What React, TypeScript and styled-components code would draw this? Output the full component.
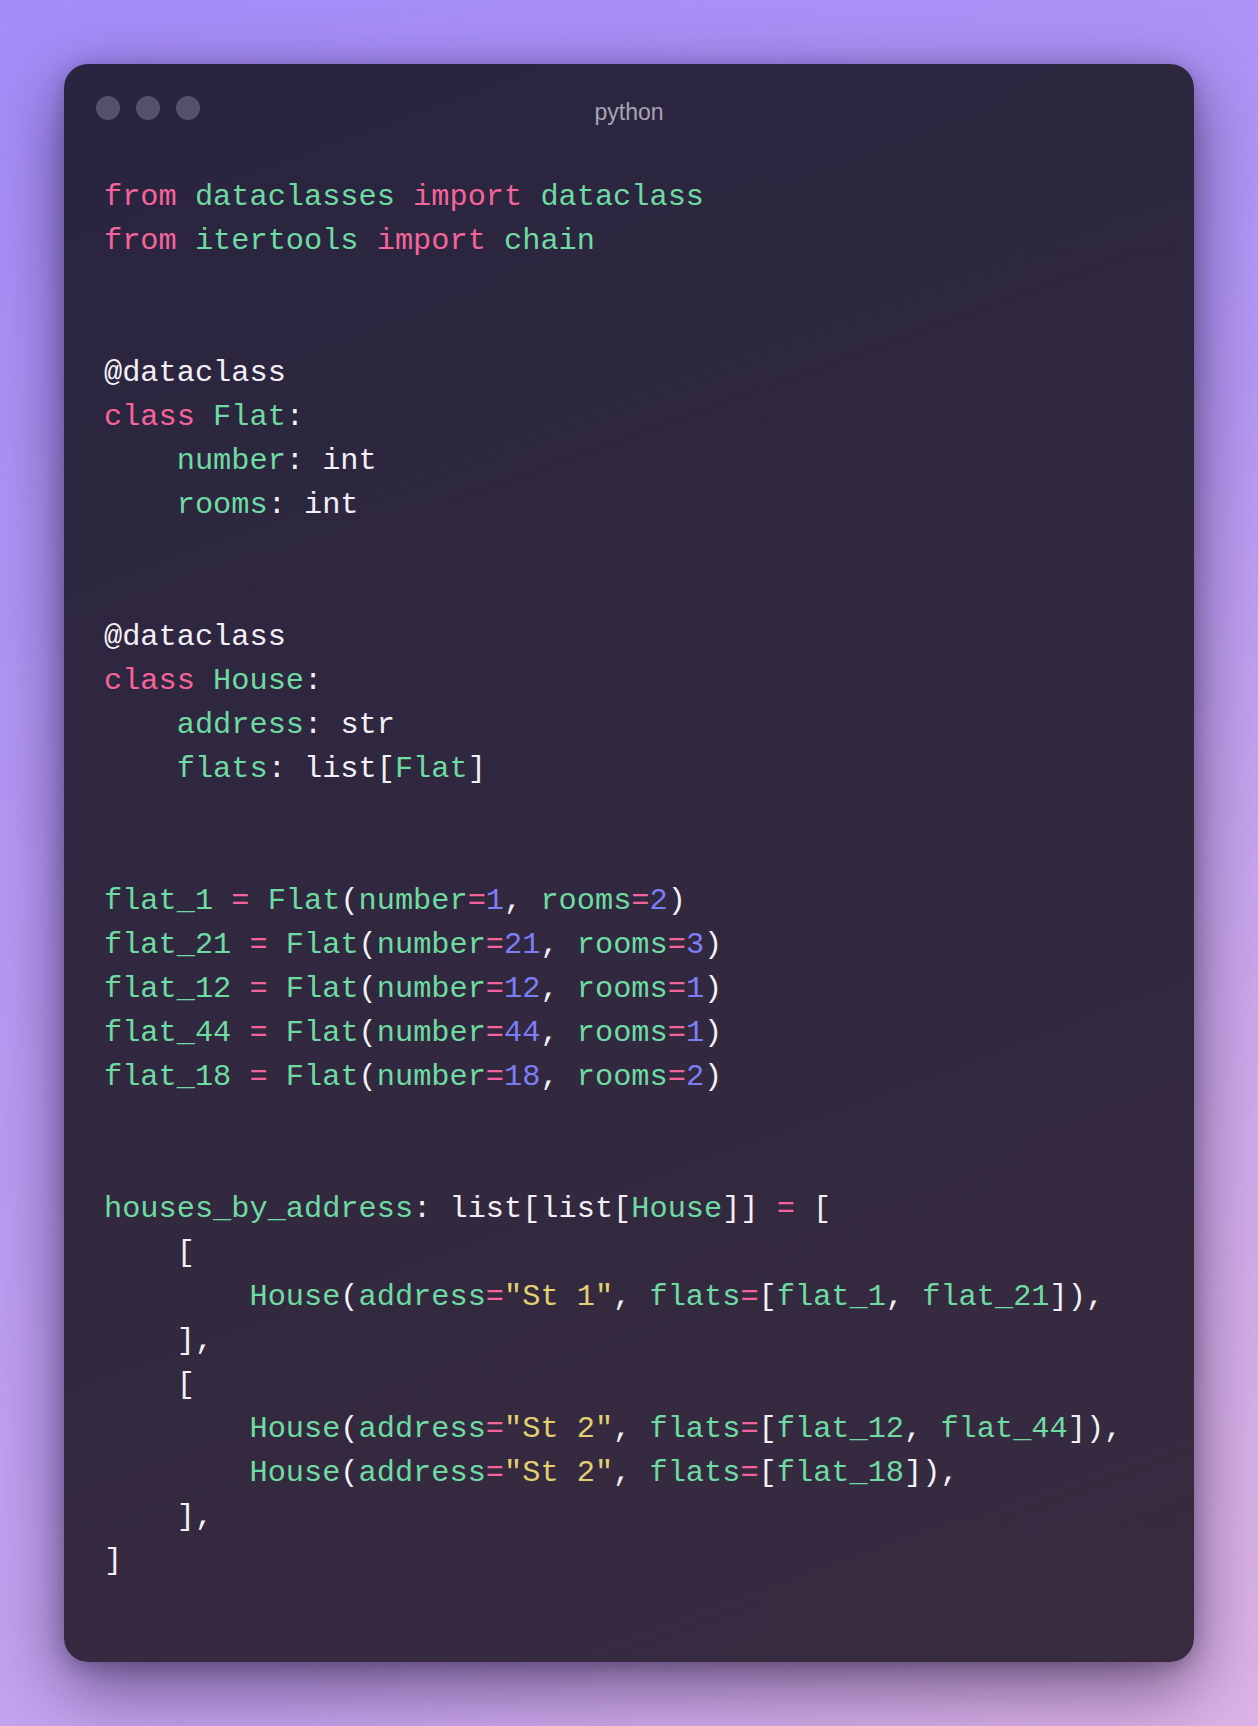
import React from "react";
import styled, { createGlobalStyle } from "styled-components";

const GlobalStyle = createGlobalStyle`
  html, body { margin: 0; padding: 0; }
  body { background: #b49cf3; }
`;

type Tone = "kw" | "name" | "plain" | "num" | "str" | "op";

const toneColor: Record<Tone, string> = {
  kw: "#f4649a",
  op: "#f4649a",
  name: "#6edba2",
  plain: "#f4f0f7",
  num: "#7d7ef6",
  str: "#e2d072",
};

const Page = styled.div`
  min-height: 1726px;
  box-sizing: border-box;
  padding: 64px 64px 64px;
  background:
    radial-gradient(ellipse at 100% 100%, rgba(222, 180, 230, 0.9) 0%, rgba(222, 180, 230, 0) 55%),
    linear-gradient(160deg, #a38cf8 0%, #b89af4 45%, #cba8ec 100%);
`;

const Window = styled.div`
  width: 1130px;
  box-sizing: border-box;
  border-radius: 24px;
  padding: 32px 32px 79px;
  background: linear-gradient(160deg, #29243f 0%, #30283f 45%, #382b40 100%);
  box-shadow: 0 24px 70px rgba(20, 10, 40, 0.55), 0 4px 20px rgba(20, 10, 40, 0.25);
`;

const TitleBar = styled.div`
  display: grid;
  grid-template-columns: 1fr auto 1fr;
  align-items: start;
  height: 24px;
`;

const Dots = styled.div`
  display: flex;
  gap: 16px;
`;

const Dot = styled.span`
  width: 24px;
  height: 24px;
  border-radius: 50%;
  background: #56516a;
`;

const Title = styled.div`
  font-family: "Liberation Sans", Arial, sans-serif;
  font-size: 23px;
  line-height: 24px;
  padding-top: 4px;
  color: #a7a3b5;
`;

const Code = styled.pre`
  margin: 55px 0 0;
  padding: 0 0 0 8px;
  font-family: "Liberation Mono", "Courier New", monospace;
  font-size: 30.3px;
  line-height: 44px;
  color: #f4f0f7;
`;

const Line = styled.div`
  height: 44px;
  white-space: pre;
`;

const Token = styled.span<{ $tone: Tone }>`
  color: ${(p) => toneColor[p.$tone]};
`;

type Tok = [Tone, string];

const K = (t: string): Tok => ["kw", t];
const N = (t: string): Tok => ["name", t];
const P = (t: string): Tok => ["plain", t];
const D = (t: string): Tok => ["num", t];
const S = (t: string): Tok => ["str", t];
const O = (t: string): Tok => ["op", t];

const flatLine = (v: string, num: string, rooms: string): Tok[] => [
  N(v),
  P(" "),
  O("="),
  P(" "),
  N("Flat"),
  P("("),
  N("number"),
  O("="),
  D(num),
  P(", "),
  N("rooms"),
  O("="),
  D(rooms),
  P(")"),
];

const houseLine = (addr: string, flats: string[]): Tok[] => {
  const out: Tok[] = [
    P("        "),
    N("House"),
    P("("),
    N("address"),
    O("="),
    S(`"${addr}"`),
    P(", "),
    N("flats"),
    O("="),
    P("["),
  ];
  flats.forEach((f, i) => {
    if (i > 0) out.push(P(", "));
    out.push(N(f));
  });
  out.push(P("]),"));
  return out;
};

const lines: Tok[][] = [
  [K("from"), P(" "), N("dataclasses"), P(" "), K("import"), P(" "), N("dataclass")],
  [K("from"), P(" "), N("itertools"), P(" "), K("import"), P(" "), N("chain")],
  [],
  [],
  [P("@dataclass")],
  [K("class"), P(" "), N("Flat"), P(":")],
  [P("    "), N("number"), P(": int")],
  [P("    "), N("rooms"), P(": int")],
  [],
  [],
  [P("@dataclass")],
  [K("class"), P(" "), N("House"), P(":")],
  [P("    "), N("address"), P(": str")],
  [P("    "), N("flats"), P(": list["), N("Flat"), P("]")],
  [],
  [],
  flatLine("flat_1", "1", "2"),
  flatLine("flat_21", "21", "3"),
  flatLine("flat_12", "12", "1"),
  flatLine("flat_44", "44", "1"),
  flatLine("flat_18", "18", "2"),
  [],
  [],
  [N("houses_by_address"), P(": list[list["), N("House"), P("]] "), O("="), P(" [")],
  [P("    [")],
  houseLine("St 1", ["flat_1", "flat_21"]),
  [P("    ],")],
  [P("    [")],
  houseLine("St 2", ["flat_12", "flat_44"]),
  houseLine("St 2", ["flat_18"]),
  [P("    ],")],
  [P("]")],
];

export default function App() {
  return (
    <>
      <GlobalStyle />
      <Page>
        <Window>
          <TitleBar>
            <Dots>
              <Dot />
              <Dot />
              <Dot />
            </Dots>
            <Title>python</Title>
            <span />
          </TitleBar>
          <Code>
            {lines.map((toks, i) => (
              <Line key={i}>
                {toks.map(([tone, text], j) => (
                  <Token key={j} $tone={tone}>
                    {text}
                  </Token>
                ))}
              </Line>
            ))}
          </Code>
        </Window>
      </Page>
    </>
  );
}
